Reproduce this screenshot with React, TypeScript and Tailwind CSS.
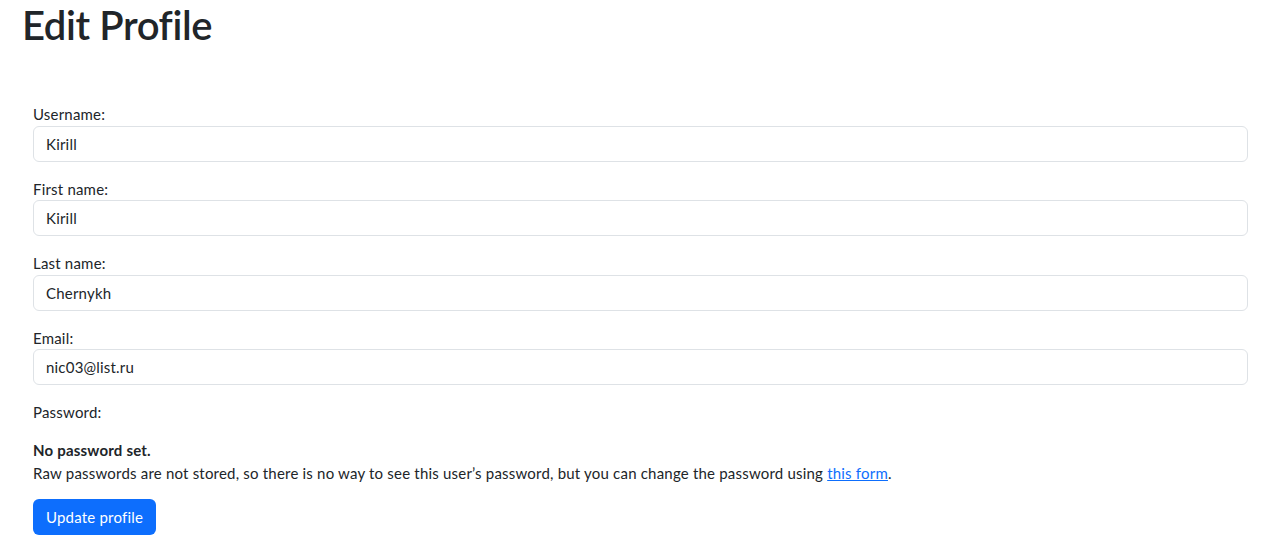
import React from 'react'

interface FieldProps {
  label: string
  value: string
}

function Field({ label, value }: FieldProps) {
  return (
    <div className="mb-4">
      <label className="block leading-[22.5px]">{label}</label>
      <input
        type="text"
        defaultValue={value}
        className="block w-full h-[36px] px-3 rounded-md border border-[#dee2e6] bg-white text-[#212529] leading-[22px] tracking-[0.2px] outline-none"
      />
    </div>
  )
}

export default function App() {
  return (
    <div className="min-h-[554px] bg-white text-[#212529] text-[15px] tracking-[0.2px] font-['Lato','Liberation_Sans',sans-serif]">
      <h1 className="pl-[22px] text-[40px] font-semibold leading-[50px] tracking-[-0.4px]">Edit Profile</h1>
      <form className="pt-[53px] pl-[33px] pr-[32px]" onSubmit={(e) => e.preventDefault()}>
        <Field label="Username:" value="Kirill" />
        <Field label="First name:" value="Kirill" />
        <Field label="Last name:" value="Chernykh" />
        <Field label="Email:" value="nic03@list.ru" />
        <div className="mb-[14px]">
          <label className="block leading-[22px] mb-4">Password:</label>
          <div className="leading-[23px]">
            <strong className="block font-bold">No password set.</strong>
            <p>
              Raw passwords are not stored, so there is no way to see this user’s password, but you can change the password using{' '}
              <a href="#" className="text-[#0d6efd] underline">this form</a>.
            </p>
          </div>
        </div>
        <button
          type="submit"
          className="h-[36px] px-[13px] rounded-md bg-[#0d6efd] text-white leading-[22px]"
        >
          Update profile
        </button>
      </form>
    </div>
  )
}
